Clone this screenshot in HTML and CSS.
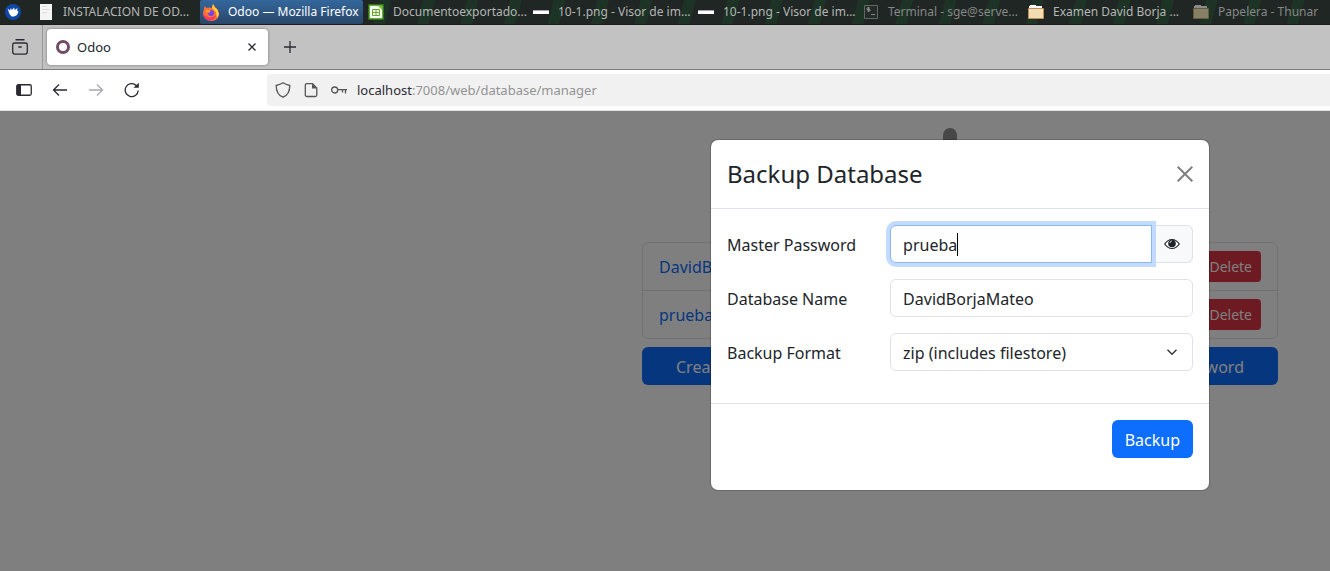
FILE: index.html
```
<!DOCTYPE html>
<html lang="es">
<head>
<meta charset="utf-8">
<title>Odoo</title>
<link rel="stylesheet" href="styles.css">
</head>
<body>
<nav class="panel" aria-label="Ventanas">
  <button class="task launcher" aria-label="Menú"><svg width="16" height="16" viewBox="0 0 16 16"><circle cx="8" cy="8" r="8" fill="#0d48a8"/><path d="M2.500 4.500l2.500 2 .8-2.500 1.200 2 2-2.500.8 2.500 2.700-2-.5 2.500 1.500 1-1.500 3.500-3 1.500H6.500L4.500 10z" fill="#fff"/></svg></button>
  <button class="task wide"><svg width="16" height="18" viewBox="0 0 16 18"><path d="M2 1h12v16H2z" fill="#f4f4f4"/><path d="M4 3.500h5M4 6.500h7M4 9.500h5" stroke="#ddd"/></svg><span>INSTALACION DE OD...</span></button>
  <button class="task active"><svg width="16" height="17" viewBox="0 0 16 17"><path d="M1 5l.5-3L3.500 4 6 3.500 9 4l1-4 3 4 2 2 1 4c0 4-3 7-8 7S0 13 0 9z" fill="#ff7139"/><path d="M10 0l2 4 2 1 2 5-2 4-1-6-4-4z" fill="#ffd43b"/><path d="M0 9c2 5 9 6 13 2-1 7-12 8-13-2z" fill="#f2356b"/><circle cx="8" cy="9" r="3" fill="#7542e5"/><path d="M3 6h3l2 1-2 2-3-1z" fill="#ff9a29"/></svg><span>Odoo — Mozilla Firefox</span></button>
  <button class="task"><svg width="16" height="16" viewBox="0 0 16 16"><path d="M1 1h14v14H1z" fill="#f5faef" stroke="#3b8a12" stroke-width="1.500"/><path d="M10 2l4 4V2z" fill="#78c840"/><path d="M4.500 5.500h7v6h-7zM8 5.500v6M4.500 8.500h7" fill="none" stroke="#63a92b"/></svg><span>Documentoexportado...</span></button>
  <button class="task"><svg width="16" height="16" viewBox="0 0 16 16"><path d="M0 6h16v4H0z" fill="#fff"/><path d="M0 6h16v1H0z" fill="#a99fba"/></svg><span>10-1.png - Visor de im...</span></button>
  <button class="task"><svg width="16" height="16" viewBox="0 0 16 16"><path d="M0 6h16v4H0z" fill="#fff"/><path d="M0 6h16v1H0z" fill="#a99fba"/></svg><span>10-1.png - Visor de im...</span></button>
  <button class="task dim"><svg width="16" height="16" viewBox="0 0 16 16"><path d="M1.500 1.500h13v13h-13z" fill="#252b28" stroke="#626864"/><path d="M5.500 3v5M7 4H4v1.500h3V7H4M8 10.500h4" fill="none" stroke="#999" stroke-width=".8"/></svg><span>Terminal - sge@serve...</span></button>
  <button class="task"><svg width="16" height="16" viewBox="0 0 16 16"><path d="M2 2V1h6v1h6v3H1V2z" fill="#fff"/><path d="M.5 4.500h15v10H.5z" fill="#f3dbb3" stroke="#b89355"/></svg><span>Examen David Borja ...</span></button>
  <button class="task dim"><svg width="16" height="16" viewBox="0 0 16 16"><path d="M2 2V1h6v1h6v3H1V2z" fill="#888c88"/><path d="M.5 4.500h15v10H.5z" fill="#878067" stroke="#665c3c"/></svg><span>Papelera - Thunar</span></button>
</nav>
<header class="tabs">
  <button class="recent" aria-label="Pestañas recientes"><svg width="16" height="16" viewBox="0 0 16 16"><path d="M3.500.75h9M2.500 4h11c1.200 0 1.800.6 1.800 1.800v7c0 1.500-.8 2.400-2.300 2.400H3C1.500 15.200.7 14.300.7 12.800v-7C.7 4.600 1.300 4 2.500 4zM6.300 8h3.400"/></svg></button>
  <div class="tab"><svg class="ring" width="14" height="14" viewBox="0 0 14 14"><circle cx="7" cy="7" r="5.500"/></svg><span>Odoo</span><button aria-label="Cerrar pestaña"><svg width="8" height="8" viewBox="0 0 8 8"><path d="M.5.5l7 7M7.500.5l-7 7"/></svg></button></div>
  <button class="newtab" aria-label="Nueva pestaña"><svg width="12" height="12" viewBox="0 0 12 12"><path d="M6 0v12M0 6h12"/></svg></button>
</header>
<div class="toolbar">
  <div class="tools">
    <button aria-label="Barra lateral"><svg width="16" height="16" viewBox="0 0 16 16"><rect x=".75" y="2.750" width="14.500" height="10.500" rx="1.500"/><path d="M1 3h4v10H1z" fill="#2b2a33" stroke="none"/></svg></button>
    <button aria-label="Atrás"><svg width="16" height="16" viewBox="0 0 16 16"><path d="M15 8H1.500M7 2.500L1.500 8 7 13.500"/></svg></button>
    <button class="disabled" aria-label="Adelante" disabled><svg width="16" height="16" viewBox="0 0 16 16"><path d="M1 8h13.500M9 2.500L14.500 8 9 13.500"/></svg></button>
    <button aria-label="Recargar"><svg width="16" height="16" viewBox="0 0 16 16"><path d="M14.200 8.500A6.500 6.500 0 1 1 12.300 3.500"/><path d="M9.500 5.800h5.300V.8z" fill="#2b2a33" stroke="none"/></svg></button>
  </div>
  <div class="address">
    <svg width="16" height="16" viewBox="0 0 16 16"><path d="M8 .8C6 2.200 3.500 3 1.200 3.500c0 6 1.800 9.900 6.800 11.700 5-1.800 6.800-5.700 6.800-11.700C12.500 3 10 2.200 8 .8z"/></svg>
    <svg width="16" height="16" viewBox="0 0 16 16"><path d="M4 1.700h5.500l4.300 4.300v7c0 1-.5 1.500-1.500 1.500H4c-1 0-1.700-.5-1.700-1.500V3.200c0-1 .7-1.500 1.700-1.500z"/><path d="M9 1.500v5h5z" fill="#555" stroke="none"/></svg>
    <svg width="16" height="16" viewBox="0 0 16 16"><circle cx="3.700" cy="8" r="3"/><path d="M6.700 7.700H16M11.500 8v2.500M14.500 8v3.500"/></svg>
    <a href="#"><b>localhost</b>:7008/web/database/manager</a>
  </div>
</div>
<main class="page">
  <div class="manager">
    <div class="logo"></div>
    <ul class="list">
      <li><a href="#">DavidBorjaMateo</a><button>Delete</button></li>
      <li><a href="#">prueba</a><button>Delete</button></li>
    </ul>
    <div class="actions"><button>Create Database</button><button>Set Master Password</button></div>
  </div>
  <div class="backdrop">
    <form class="dialog" role="dialog" aria-labelledby="title">
      <div class="head"><h4 id="title">Backup Database</h4><button type="button" aria-label="Close"><svg width="16" height="16" viewBox="0 0 16 16"><path d="M.7.7l14.600 14.600M15.300.7L.7 15.300"/></svg></button></div>
      <div class="fields">
        <div class="row"><label for="pwd">Master Password</label><div class="group"><input id="pwd" type="text" value="prueba" autofocus><button type="button" aria-label="Show password"><svg width="16" height="12" viewBox="0 0 16 12"><path d="M.7 6c4-6 10.600-6 14.600 0-4 6-10.600 6-14.600 0z" fill="#fff" stroke="#212529" stroke-width="1.200"/><circle cx="8" cy="5.500" r="3.800" fill="#212529"/><path d="M6 5c0-1.200.7-2 2-2" fill="none" stroke="#fff" stroke-width=".8"/></svg></button><span class="caret" aria-hidden="true"></span></div></div>
        <div class="row"><label for="name">Database Name</label><input id="name" type="text" value="DavidBorjaMateo"></div>
        <div class="row"><label for="format">Backup Format</label><div class="choice"><select id="format"><option>zip (includes filestore)</option><option>pg_dump custom format (without filestore)</option></select><svg width="12" height="12" viewBox="0 0 16 16"><path d="M2 5l6 6 6-6"/></svg></div></div>
      </div>
      <div class="foot"><button>Backup</button></div>
    </form>
  </div>
</main>
</body>
</html>
```
FILE: styles.css
```
* { box-sizing: border-box; }
body { margin: 0; min-height: 100vh; display: flex; flex-direction: column; overflow: hidden; font: 16px/24px "Noto Sans", sans-serif; color: #212529; }
button, input, select { font: inherit; color: inherit; margin: 0; padding: 0; border: 0; background: none; }
svg { flex: none; fill: none; }

.panel { display: flex; height: 25px; padding-left: 5px; border-bottom: 1px solid #1b1d1c; overflow: hidden; background: repeating-linear-gradient(105deg, transparent 0 31px, #1d3326 31px 42px), #202624; font-size: 12px; line-height: 24px; color: #b4b6b5; }
.task { display: flex; align-items: center; gap: 9px; width: 165px; flex: none; padding-left: 3px; white-space: nowrap; text-align: left; }
.task.launcher { width: 27px; padding: 0; background: #202624; }
.task.wide { width: 168px; padding-left: 6px; background: #202624; }
.task.active { width: 163px; margin-right: 2px; color: #fff; background: linear-gradient(#34679d, #294668); border-radius: 2px; }
.task.dim { color: #858886; }

.tabs { display: flex; align-items: center; height: 45px; background: #c2c2c2; border-bottom: 1px solid #7d7d7d; font-size: 13px; }
.tabs svg, .toolbar svg { display: block; stroke: #2b2a33; stroke-width: 1.3; }
.recent { align-self: stretch; width: 43px; padding-left: 12px; border-right: 1px solid #989898; }
.tab { display: flex; align-items: center; gap: 7px; width: 221px; height: 36px; margin-left: 4px; padding: 0 12px 0 9px; border-radius: 4px; background: #fff; box-shadow: 0 0 3px #0006; }
.tabs .ring { stroke: #714b67; stroke-width: 3; }
.tab button { margin-left: auto; }
.newtab { margin-left: 16px; }

.toolbar { display: flex; align-items: center; height: 41px; background: #fff; border-bottom: 1px solid #e2e2e2; font-size: 13px; }
.tools { display: flex; gap: 20px; width: 267px; padding-left: 16px; flex: none; }
.tools .disabled { opacity: .4; }
.address { display: flex; flex: 1; align-items: center; gap: 12px; height: 32px; padding-left: 8px; border-radius: 4px 0 0 4px; background: #f1f1f1; }
.address svg { stroke: #555; }
.address a { margin-left: -2px; color: #939393; text-decoration: none; }
.address b { color: #2b2a33; font-weight: 400; }

.page { position: relative; flex: 1; overflow: hidden; background: #fff; }
.manager { max-width: 636px; margin: 0 52px 0 auto; padding-top: 17px; }
.logo { width: 14px; height: 98px; margin: 0 auto 16px 301px; border-radius: 7px; background: #8f8f8f; }
.list { margin: 0 0 8px; padding: 0; list-style: none; border: 1px solid #dee2e6; border-radius: 6px; }
.list li { display: flex; align-items: center; justify-content: space-between; padding: 8px 16px; }
.list li + li { border-top: 1px solid #dee2e6; }
.list a { color: #0d6efd; text-decoration: none; }
.list button { padding: 5px 9px; border-radius: 4px; background: #dc3545; color: #fff; font-size: 14px; line-height: 21px; }
.actions { display: flex; border-radius: 6px; overflow: hidden; background: #0d6efd; }
.actions button { padding: 8px 34px 6px; color: #fff; }
.actions button + button { margin-left: auto; }

.backdrop { position: absolute; inset: 0; padding: 28px 120px 0 16px; background: #00000080; }
.dialog { max-width: 500px; margin-left: auto; border: 1px solid #0000002d; border-radius: 8px; background: #fff; background-clip: padding-box; }
.head { display: flex; align-items: center; justify-content: space-between; padding: 16px; border-bottom: 1px solid #dee2e6; }
.head h4 { margin: 0; font-size: 24px; line-height: 36px; font-weight: 400; }
.head svg { display: block; stroke: #808080; stroke-width: 2; }
.fields { display: grid; gap: 16px; padding: 16px 16px 32px; }
.row { display: grid; grid-template-columns: 35% 65%; align-items: center; }
.row label { padding-top: 2px; }
.row input, .row select { width: 100%; min-width: 0; height: 38px; padding: 7px 12px 5px; border: 1px solid #dee2e6; border-radius: 6px; background: #fff; }
.group { display: flex; position: relative; }
.row .group input { position: relative; z-index: 1; flex: 1; border-color: #86b7fe; border-radius: 6px 0 0 6px; box-shadow: 0 0 0 4px #c2dbfe; outline: 0; caret-color: transparent; }
.group button { display: flex; align-items: center; padding: 0 12px; border: 1px solid #dee2e6; border-left: 0; border-radius: 0 6px 6px 0; background: #f8f9fa; }
.caret { position: absolute; z-index: 2; left: 67px; top: 8px; width: 1px; height: 23px; background: #000; }
.choice { position: relative; }
.choice select { display: block; appearance: none; }
.choice svg { position: absolute; right: 15px; top: 13px; stroke: #343a40; stroke-width: 2; pointer-events: none; }
.foot { display: flex; justify-content: flex-end; padding: 16px 16px 32px; border-top: 1px solid #dee2e6; }
.foot button { padding: 8px 13px 6px; border-radius: 6px; background: #0d6efd; color: #fff; }
```
